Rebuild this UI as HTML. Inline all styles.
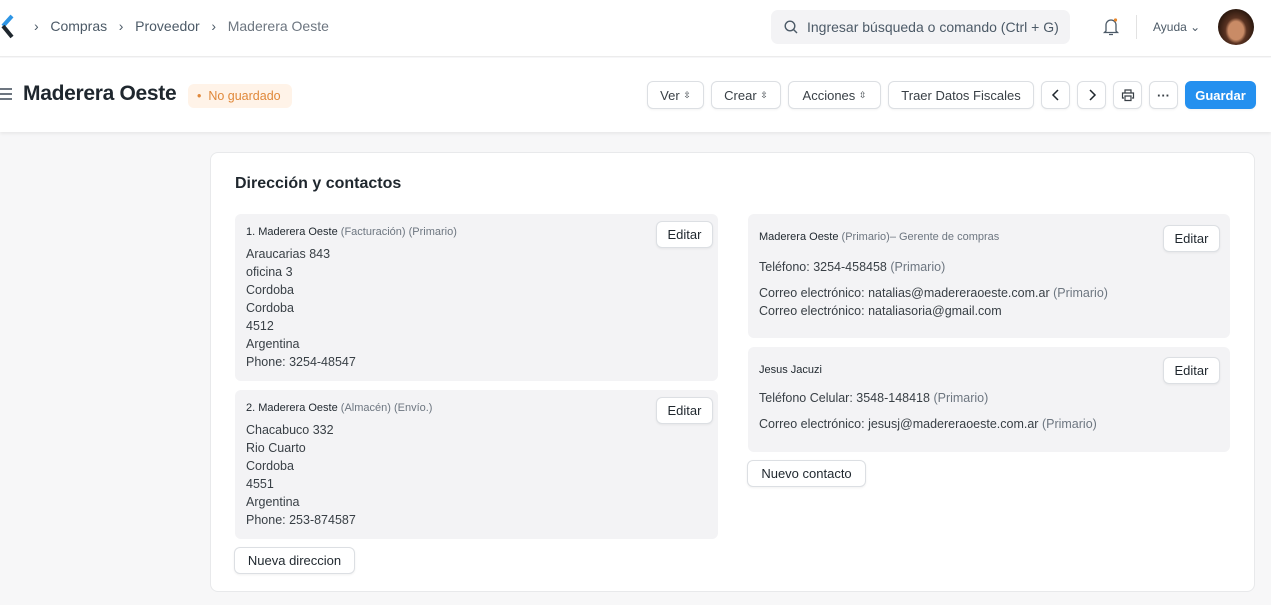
<!DOCTYPE html>
<html><head><meta charset="utf-8"><style>
*{box-sizing:border-box;margin:0;padding:0}
body{width:1271px;height:605px;overflow:hidden;background:#f7f7f8;font-family:"Liberation Sans",sans-serif;color:#1f272e;position:relative}
.a{position:absolute;white-space:nowrap}
.nav{left:0;top:0;width:1271px;height:57px;background:#fff;border-bottom:1px solid #ececec}
.hdr{left:0;top:58px;width:1271px;height:74px;background:#fff;box-shadow:0 2px 3px rgba(0,0,0,.06)}
.bc{top:18px;font-size:14px;color:#4c5a67}
.btn{position:absolute;top:81px;height:28px;border:1px solid #dcdfe3;border-radius:6px;background:#fff;font-size:13px;color:#383f45;display:flex;align-items:center;justify-content:center;box-shadow:0 1px 2px rgba(0,0,0,.05);white-space:nowrap}
.card{left:210px;top:152px;width:1045px;height:440px;background:#fff;border:1px solid #e8e9eb;border-radius:8px}
.box{position:absolute;background:#f3f3f5;border-radius:6px}
.t{font-size:12.5px;color:#383f45;line-height:18px}
.s{font-size:11px;color:#1f272e}
.g{color:#6d7680}
.ed{position:absolute;width:57px;height:27px;border:1px solid #dcdfe3;border-radius:6px;background:#fff;font-size:13px;color:#1f272e;display:flex;align-items:center;justify-content:center;box-shadow:0 1px 2px rgba(0,0,0,.06);white-space:nowrap}
</style></head><body>
<div class="a nav"></div>
<svg class="a" style="left:0;top:14px" width="16" height="26" viewBox="0 0 16 26"><path d="M12 2 L3 12" stroke="#2d95e5" stroke-width="4"/><path d="M3 12 L12 23" stroke="#1f272e" stroke-width="4"/></svg>
<div class="a bc" style="left:34px">›&nbsp;&nbsp;&nbsp;Compras&nbsp;&nbsp;&nbsp;›&nbsp;&nbsp;&nbsp;Proveedor&nbsp;&nbsp;&nbsp;›&nbsp;&nbsp;&nbsp;<span style="color:#6d7680">Maderera Oeste</span></div>
<div class="a" style="left:771px;top:10px;width:299px;height:34px;background:#f3f3f5;border-radius:7px"></div>
<svg class="a" style="left:784px;top:20px" width="14" height="14" viewBox="0 0 14 14"><circle cx="6" cy="6" r="4.8" fill="none" stroke="#4c5a67" stroke-width="1.4"/><path d="M9.5 9.5L13 13" stroke="#4c5a67" stroke-width="1.4"/></svg>
<div class="a" style="left:807px;top:19px;font-size:14px;color:#4c5a67">Ingresar búsqueda o comando (Ctrl + G)</div>
<svg class="a" style="left:1102px;top:17px" width="18" height="20" viewBox="0 0 18 20"><path d="M4 14V8a5 5 0 0 1 10 0v6l1.5 1.5h-13z M7 17.5h4" fill="none" stroke="#4c5a67" stroke-width="1.3"/><circle cx="13.5" cy="3" r="1.6" fill="#e8862a"/></svg>
<div class="a" style="left:1136px;top:15px;width:1px;height:24px;background:#e2e2e2"></div>
<div class="a" style="left:1153px;top:20px;font-size:12px;color:#4c5a67">Ayuda ⌄</div>
<div class="a" style="left:1218px;top:9px;width:36px;height:36px;border-radius:50%;background:radial-gradient(ellipse at 50% 60%,#c98b66 0 30%,#5a3322 42%,#2e1a10 70%)"></div>
<div class="a hdr"></div>
<div class="a" style="left:0;top:88px;width:12px;height:2px;background:#6d7680;box-shadow:0 5px 0 #6d7680,0 10px 0 #6d7680"></div>
<div class="a" style="left:23px;top:82px;font-size:21px;font-weight:bold;color:#1f272e;letter-spacing:-0.3px">Maderera Oeste</div>
<div class="a" style="left:188px;top:84px;width:104px;height:24px;background:#fff3e8;border-radius:6px;font-size:12.5px;color:#e0883a;padding:5px 0 0 9px">•&nbsp; No guardado</div>
<div class="btn" style="left:647px;width:57px">Ver&nbsp;<span style="font-size:9px">⇳</span></div>
<div class="btn" style="left:711px;width:70px">Crear&nbsp;<span style="font-size:9px">⇳</span></div>
<div class="btn" style="left:788px;width:93px">Acciones&nbsp;<span style="font-size:9px">⇳</span></div>
<div class="btn" style="left:888px;width:146px">Traer Datos Fiscales</div>
<div class="btn" style="left:1041px;width:29px"><svg width="10" height="12" viewBox="0 0 10 12"><path d="M7 1L2 6l5 5" fill="none" stroke="#1f272e" stroke-width="1.5"/></svg></div>
<div class="btn" style="left:1077px;width:29px"><svg width="10" height="12" viewBox="0 0 10 12"><path d="M3 1l5 5-5 5" fill="none" stroke="#1f272e" stroke-width="1.5"/></svg></div>
<div class="btn" style="left:1113px;width:29px"><svg width="14" height="14" viewBox="0 0 14 14"><path d="M4 5V2h6v3M3 10H1.5V5h11v5H11M4 8h6v4.5H4z" fill="none" stroke="#383f45" stroke-width="1.2"/></svg></div>
<div class="btn" style="left:1149px;width:29px;font-weight:bold">···</div>
<div class="btn" style="left:1185px;width:71px;background:#2490ef;border-color:#2490ef;color:#fff;font-weight:bold">Guardar</div>
<div class="a card"></div>
<div class="a" style="left:235px;top:175px;font-size:16px;font-weight:bold;color:#1f272e">Dirección y contactos</div>
<div class="box" style="left:235px;top:214px;width:483px;height:167px"></div>
<div class="a t" style="left:246px;top:223px"><div class="s">1. Maderera Oeste <span class="g">(Facturación) (Primario)</span></div><div style="margin-top:4px">Araucarias 843<br>oficina 3<br>Cordoba<br>Cordoba<br>4512<br>Argentina<br>Phone: 3254-48547</div></div>
<div class="ed" style="left:656px;top:221px">Editar</div>
<div class="box" style="left:235px;top:390px;width:483px;height:149px"></div>
<div class="a t" style="left:246px;top:399px"><div class="s">2. Maderera Oeste <span class="g">(Almacén) (Envío.)</span></div><div style="margin-top:4px">Chacabuco 332<br>Rio Cuarto<br>Cordoba<br>4551<br>Argentina<br>Phone: 253-874587</div></div>
<div class="ed" style="left:656px;top:397px">Editar</div>
<div class="ed" style="left:234px;top:547px;width:121px">Nueva direccion</div>
<div class="box" style="left:748px;top:214px;width:482px;height:124px"></div>
<div class="a s" style="left:759px;top:231px">Maderera Oeste <span class="g">(Primario)– Gerente de compras</span></div>
<div class="a t" style="left:759px;top:258px">Teléfono: 3254-458458 <span class="g">(Primario)</span></div>
<div class="a t" style="left:759px;top:284px">Correo electrónico: natalias@madereraoeste.com.ar <span class="g">(Primario)</span><br>Correo electrónico: nataliasoria@gmail.com</div>
<div class="ed" style="left:1163px;top:225px">Editar</div>
<div class="box" style="left:748px;top:347px;width:482px;height:105px"></div>
<div class="a s" style="left:759px;top:364px">Jesus Jacuzi</div>
<div class="a t" style="left:759px;top:389px">Teléfono Celular: 3548-148418 <span class="g">(Primario)</span></div>
<div class="a t" style="left:759px;top:415px">Correo electrónico: jesusj@madereraoeste.com.ar <span class="g">(Primario)</span></div>
<div class="ed" style="left:1163px;top:357px">Editar</div>
<div class="ed" style="left:747px;top:460px;width:119px">Nuevo contacto</div>
</body></html>
